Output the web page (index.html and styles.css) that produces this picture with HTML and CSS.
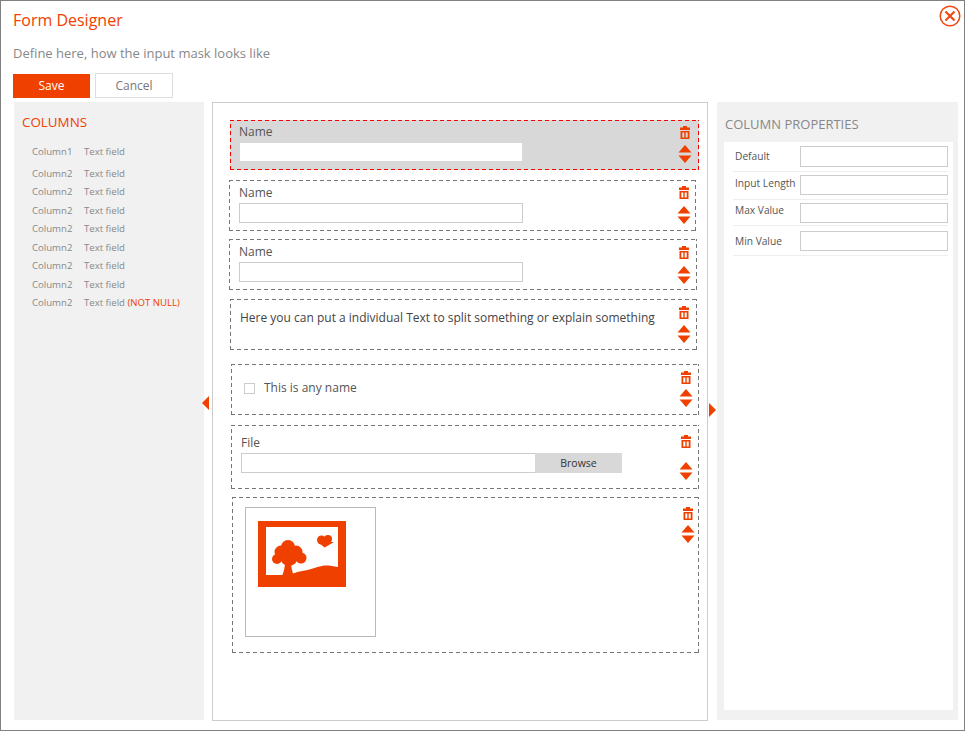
FILE: index.html
```html
<!DOCTYPE html>
<html lang="en">
<head>
  <meta charset="UTF-8">
  <meta name="viewport" content="width=device-width, initial-scale=1.0">
  <title>Form Designer</title>
  <link rel="stylesheet" href="styles.css">
</head>
<body>
  <svg class="sprites" width="0" height="0" aria-hidden="true">
    <symbol id="trash" viewBox="0 0 12 13">
      <path d="M4 0H8V1.500H11V4H1V1.500H4Z"/>
      <path fill-rule="evenodd" d="M1.500 5H10.500V13H1.500ZM3.300 6.500V11.500H5.300V6.500ZM6.700 6.500V11.500H8.700V6.500Z"/>
    </symbol>
    <symbol id="updown" viewBox="0 0 14 18">
      <path d="M7 0L13.500 7.500H0.500Z"/>
      <path d="M0.500 10.500H13.500L7 18Z"/>
    </symbol>
  </svg>

  <div class="window">
    <svg class="close" viewBox="0 0 22 22" width="22" height="22">
      <circle cx="11" cy="11" r="9.8"/>
      <path d="M6.500 6.500L15.500 15.500M15.500 6.500L6.500 15.500"/>
    </svg>

    <h1 class="title">Form Designer</h1>
    <p class="subtitle">Define here, how the input mask looks like</p>
    <div class="toolbar">
      <button class="btn btn-save" type="button">Save</button>
      <button class="btn btn-cancel" type="button">Cancel</button>
    </div>

    <div class="panels">
      <aside class="columns">
        <h2 class="columns-title">COLUMNS</h2>
        <ul class="column-list">
          <li class="first"><span class="col-name">Column1</span><span>Text field</span></li>
          <li><span class="col-name">Column2</span><span>Text field</span></li>
          <li><span class="col-name">Column2</span><span>Text field</span></li>
          <li><span class="col-name">Column2</span><span>Text field</span></li>
          <li><span class="col-name">Column2</span><span>Text field</span></li>
          <li><span class="col-name">Column2</span><span>Text field</span></li>
          <li><span class="col-name">Column2</span><span>Text field</span></li>
          <li><span class="col-name">Column2</span><span>Text field</span></li>
          <li><span class="col-name">Column2</span><span>Text field <em>(NOT NULL)</em></span></li>
        </ul>
        <span class="arrow-left"></span>
      </aside>

      <main class="canvas">
        <section class="field field-1 selected">
          <div class="field-body">
            <label class="field-label">Name</label>
            <input class="text-input" type="text">
          </div>
          <div class="tools">
            <svg class="trash"><use href="#trash"/></svg>
            <svg class="updown"><use href="#updown"/></svg>
          </div>
        </section>

        <section class="field field-2">
          <div class="field-body">
            <label class="field-label">Name</label>
            <input class="text-input" type="text">
          </div>
          <div class="tools">
            <svg class="trash"><use href="#trash"/></svg>
            <svg class="updown"><use href="#updown"/></svg>
          </div>
        </section>

        <section class="field field-3">
          <div class="field-body">
            <label class="field-label">Name</label>
            <input class="text-input" type="text">
          </div>
          <div class="tools">
            <svg class="trash"><use href="#trash"/></svg>
            <svg class="updown"><use href="#updown"/></svg>
          </div>
        </section>

        <section class="field field-4">
          <div class="field-body">
            <p class="note">Here you can put a individual Text to split something or explain something</p>
          </div>
          <div class="tools">
            <svg class="trash"><use href="#trash"/></svg>
            <svg class="updown"><use href="#updown"/></svg>
          </div>
        </section>

        <section class="field field-5">
          <div class="field-body check-row">
            <span class="check"></span>
            <span class="check-label">This is any name</span>
          </div>
          <div class="tools">
            <svg class="trash"><use href="#trash"/></svg>
            <svg class="updown"><use href="#updown"/></svg>
          </div>
        </section>

        <section class="field field-6">
          <div class="field-body">
            <label class="field-label">File</label>
            <div class="file-row">
              <span class="file-path"></span>
              <span class="file-btn">Browse</span>
            </div>
          </div>
          <div class="tools">
            <svg class="trash"><use href="#trash"/></svg>
            <svg class="updown"><use href="#updown"/></svg>
          </div>
        </section>

        <section class="field field-7">
          <div class="field-body">
            <div class="picture">
              <svg viewBox="0 0 88 66" width="88" height="66">
                <rect class="pic-bg" width="88" height="66"/>
                <path class="pic-sky" d="M8 6H80V46C74 45 68 44 64 45C58 46 52 49 44 50C38 51 32 54 26 54H8Z"/>
                <path class="pic-bg" d="M27 40H33C33 46 34 50 36 55H24C26 50 27 46 27 40Z"/>
                <circle class="pic-bg" cx="30" cy="26" r="7"/>
                <circle class="pic-bg" cx="23" cy="31" r="6.500"/>
                <circle class="pic-bg" cx="38" cy="31" r="6.500"/>
                <circle class="pic-bg" cx="19" cy="38" r="5"/>
                <circle class="pic-bg" cx="43" cy="37" r="5.500"/>
                <circle class="pic-bg" cx="31" cy="36" r="9"/>
                <circle class="pic-bg" cx="63.500" cy="19" r="4.500"/>
                <circle class="pic-bg" cx="70" cy="18" r="4"/>
                <path class="pic-bg" d="M60 21H76L71 24L66.500 26.500Z"/>
              </svg>
            </div>
          </div>
          <div class="tools">
            <svg class="trash"><use href="#trash"/></svg>
            <svg class="updown"><use href="#updown"/></svg>
          </div>
        </section>
        <span class="arrow-right"></span>
      </main>

      <aside class="props">
        <h2 class="props-title">COLUMN PROPERTIES</h2>
        <div class="props-body">
          <div class="prop prop-default"><label>Default</label><input type="text"></div>
          <div class="prop prop-length"><label>Input Length</label><input type="text"></div>
          <div class="prop prop-max"><label>Max Value</label><input type="text"></div>
          <div class="prop prop-min"><label>Min Value</label><input type="text"></div>
        </div>
      </aside>
    </div>
  </div>
</body>
</html>
```

FILE: styles.css
```css
* {
  box-sizing: border-box;
}
body {
  margin: 0;
  font-family: "Open Sans", "Noto Sans", sans-serif;
  background-color: white;
}
.sprites {
  position: absolute;
}
.window {
  position: relative;
  width: 965px;
  height: 731px;
  border: 1px solid #808080;
  padding: 0 5px 0 12px;
}
.close {
  position: absolute;
  top: 4px;
  right: 3px;
}
.close circle {
  fill: white;
  stroke: #f04a14;
  stroke-width: 1.5;
}
.close path {
  fill: none;
  stroke: #f04a14;
  stroke-width: 2.2;
}
.title {
  margin: 0;
  padding-top: 8px;
  font-size: 16px;
  line-height: 22px;
  font-weight: 400;
  color: #f04000;
}
.subtitle {
  margin: 12px 0 0;
  font-size: 13px;
  line-height: 20px;
  color: #888;
}
.toolbar {
  display: flex;
  gap: 5px;
  margin-top: 10px;
  height: 25px;
  align-items: flex-end;
}
.btn {
  font-family: inherit;
  font-size: 12px;
  padding: 0;
}
.btn-save {
  width: 77px;
  height: 24px;
  padding-bottom: 2px;
  border: none;
  background-color: #f04000;
  color: white;
}
.btn-cancel {
  width: 78px;
  height: 25px;
  border: 1px solid #ddd;
  background-color: white;
  color: #777;
}
.panels {
  display: grid;
  grid-template-columns: 190px 496px 242px;
  column-gap: 8px;
  margin-top: 4px;
  margin-left: 1px;
}
.columns {
  position: relative;
  height: 618px;
  background-color: #f1f1f1;
  padding: 12px 8px 0;
}
.columns-title {
  margin: 0;
  font-size: 13.4px;
  line-height: 16px;
  font-weight: 400;
  color: #f04000;
}
.column-list {
  list-style: none;
  margin: 13px 0 0;
  padding: 0 0 0 10px;
  font-size: 9.6px;
  color: #888;
}
.column-list li {
  display: flex;
  height: 18.45px;
  line-height: 18px;
}
.column-list li.first {
  height: 22px;
}
.col-name {
  width: 52px;
}
.column-list em {
  font-style: normal;
  color: #f04000;
}
.arrow-left {
  position: absolute;
  top: 294px;
  right: -5px;
  border-style: solid;
  border-width: 7px 7px 7px 0;
  border-color: transparent #f04000 transparent transparent;
}
.canvas {
  position: relative;
  height: 619px;
  border: 1px solid #ccc;
  background-color: white;
}
.arrow-right {
  position: absolute;
  top: 300px;
  right: -9px;
  border-style: solid;
  border-width: 7px 0 7px 7px;
  border-color: transparent transparent transparent #f04000;
}

/* border dashes are longer than what border: dashed gives */
.field {
  --dash: #777;
  display: flex;
  justify-content: space-between;
  border: 1px solid transparent;
  background-color: white;
  background-origin: border-box;
  background-repeat: no-repeat;
  background-image:
    repeating-linear-gradient(90deg, var(--dash) 0 4px, transparent 4px 7px),
    repeating-linear-gradient(90deg, var(--dash) 0 4px, transparent 4px 7px),
    repeating-linear-gradient(0deg, var(--dash) 0 4px, transparent 4px 7px),
    repeating-linear-gradient(0deg, var(--dash) 0 4px, transparent 4px 7px);
  background-size: 100% 1px, 100% 1px, 1px 100%, 1px 100%;
  background-position: left top, left bottom, left top, right top;
}
.field-body {
  flex: 1;
}
.tools {
  display: flex;
  flex-direction: column;
  align-items: center;
  width: 14px;
}
.trash {
  width: 12px;
  height: 13px;
  fill: #f04000;
}
.updown {
  width: 14px;
  height: 18px;
  fill: #f04000;
}
.field-label {
  display: block;
  font-size: 12px;
  line-height: 16px;
  color: #555;
}
.text-input {
  display: block;
  width: 284px;
  height: 20px;
  border: 1px solid #ccc;
  background-color: white;
  padding: 0;
}

/* each box sits a little differently in the designer */
.field-1 {
  --dash: #f00;
  width: 469px;
  height: 50px;
  margin: 17px 0 0 17px;
  padding: 3px 6px 0 8px;
  background-color: #d8d8d8;
}
.field-1 .text-input {
  margin: 3px 0 0 1px;
  width: 282px;
  height: 18px;
  border: none;
}
.field-1 .tools {
  margin-top: 2px;
}
.field-1 .updown {
  margin-top: 6px;
}
.field-2 {
  width: 467px;
  height: 51px;
  margin: 10px 0 0 16px;
  padding: 4px 4px 0 9px;
}
.field-2 .text-input {
  margin-top: 2px;
}
.field-2 .tools {
  margin-top: 1px;
}
.field-2 .updown {
  margin-top: 7px;
}
.field-3 {
  width: 468px;
  height: 51px;
  margin: 8px 0 0 16px;
  padding: 4px 5px 0 9px;
}
.field-3 .text-input {
  margin-top: 2px;
}
.field-3 .tools {
  margin-top: 2px;
}
.field-3 .updown {
  margin-top: 7px;
}
.field-4 {
  width: 467px;
  height: 51px;
  margin: 9px 0 0 17px;
  padding: 6px 5px 0 9px;
}
.note {
  margin: 4px 0 0;
  font-size: 12px;
  line-height: 16px;
  color: #444;
}
.field-4 .updown {
  margin-top: 6px;
}
.field-5 {
  width: 468px;
  height: 51px;
  margin: 14px 0 0 18px;
  padding: 6px 5px 0 12px;
}
.check-row {
  display: flex;
  align-items: center;
  gap: 9px;
  height: 34px;
}
.check {
  width: 11px;
  height: 11px;
  border: 1px solid #ccc;
  background-color: white;
}
.check-label {
  padding-bottom: 2px;
  font-size: 12px;
  color: #555;
}
.field-5 .updown {
  margin-top: 5px;
}
.field-6 {
  width: 468px;
  height: 64px;
  margin: 10px 0 0 18px;
  padding: 9px 5px 0 9px;
}
.file-row {
  display: flex;
  margin-top: 2px;
  height: 20px;
}
.file-path {
  width: 294px;
  border: 1px solid #ccc;
  border-right: none;
}
.file-btn {
  width: 87px;
  background-color: #d8d8d8;
  font-size: 10.5px;
  line-height: 20px;
  text-align: center;
  color: #333;
}
.field-6 .updown {
  margin-top: 14px;
}
.field-7 {
  width: 467px;
  height: 156px;
  margin: 8px 0 0 19px;
  padding: 9px 3px 0 12px;
}
.picture {
  width: 131px;
  height: 130px;
  border: 1px solid #bbb;
  padding: 13px 12px;
}
.picture svg {
  display: block;
}
.pic-bg {
  fill: #f04000;
}
.pic-sky {
  fill: white;
}
.field-7 .updown {
  margin-top: 5px;
}
.props {
  height: 618px;
  margin-left: 1px;
  background-color: #f1f1f1;
  padding: 13px 5px 10px 7px;
}
.props-title {
  margin: 0;
  padding-left: 1px;
  font-size: 13px;
  line-height: 18px;
  font-weight: 400;
  color: #888;
}
.props-body {
  height: 568px;
  margin-top: 9px;
  padding: 4px 5px 0 9px;
  background-color: white;
}
.prop {
  display: flex;
  justify-content: space-between;
  align-items: flex-start;
  border-bottom: 1px solid #eee;
  font-size: 10.2px;
  color: #555;
}
.prop label {
  padding-left: 2px;
}
.prop input {
  width: 148px;
  height: 20px;
  border: 1px solid #ccc;
  padding: 0;
}
.prop-default {
  height: 26px;
  line-height: 21px;
}
.prop-default input {
  height: 21px;
}
.prop-length {
  height: 28px;
  line-height: 22px;
}
.prop-length input {
  margin-top: 3px;
}
.prop-max {
  height: 26px;
  line-height: 20px;
}
.prop-max input {
  margin-top: 3px;
}
.prop-min {
  height: 30px;
  line-height: 30px;
}
.prop-min input {
  margin-top: 5px;
}
```
